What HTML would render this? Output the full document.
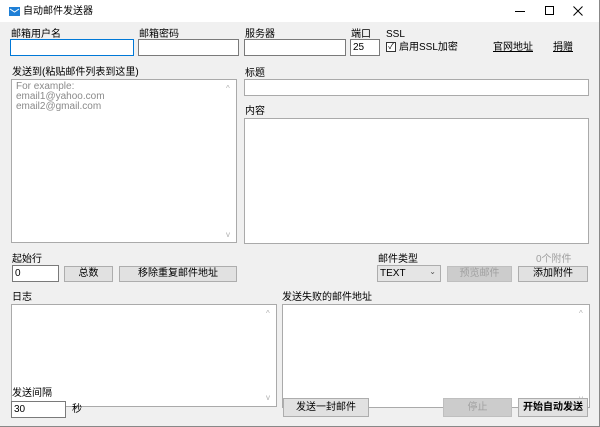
<!DOCTYPE html>
<html><head><meta charset="utf-8"><style>
*{box-sizing:border-box;margin:0;padding:0}
body{width:600px;height:427px;overflow:hidden;background:#f0f0f0;font-family:"Liberation Sans","Noto Sans CJK SC",sans-serif;font-size:10px;color:#000;position:relative}
.a{position:absolute;white-space:nowrap;line-height:12px}
.tb{position:absolute;left:0;top:0;width:600px;height:22px;background:#fff}
.in{position:absolute;background:#fff;border:1px solid #7a7a7a;font-size:10px;line-height:12px}
.btn{position:absolute;background:#e1e1e1;border:1px solid #adadad;text-align:center;font-size:10px}
.dis{color:#a0a0a0;background:#cccccc;border-color:#bfbfbf}
.sb{position:absolute;color:#b0b0b0;font-size:8px}
</style></head><body>
<div class="tb"></div>
<svg class="a" style="left:9px;top:7px" width="11" height="9"><rect x="0" y="0" width="11" height="9" fill="#1e7fd6"/><path d="M1 2 L5.5 5 L10 2" stroke="#fff" fill="none" stroke-width="1"/></svg>
<div class="a" style="left:23px;top:6px">自动邮件发送器</div>
<div class="a" style="left:515px;top:11px;width:10px;height:1px;background:#000"></div>
<div class="a" style="left:545px;top:6px;width:9px;height:9px;border:1px solid #000"></div>
<svg class="a" style="left:573px;top:6px" width="10" height="10"><path d="M0.5 0.5 L9.5 9.5 M9.5 0.5 L0.5 9.5" stroke="#000" stroke-width="1"/></svg>

<div class="a" style="left:11px;top:29px">邮箱用户名</div>
<div class="a" style="left:139px;top:29px">邮箱密码</div>
<div class="a" style="left:245px;top:29px">服务器</div>
<div class="a" style="left:351px;top:29px">端口</div>
<div class="a" style="left:386px;top:29px">SSL</div>
<div class="in" style="left:10px;top:39px;width:124px;height:17px;border-color:#0078d7"></div>
<div class="in" style="left:138px;top:39px;width:101px;height:17px"></div>
<div class="in" style="left:244px;top:39px;width:102px;height:17px"></div>
<div class="in" style="left:350px;top:39px;width:30px;height:17px;padding:2px 2px">25</div>
<div class="a" style="left:386px;top:42px;width:10px;height:10px;border:1px solid #333;background:#fff;font-size:8px;line-height:8px;text-align:center">✓</div>
<div class="a" style="left:399px;top:42px">启用SSL加密</div>
<div class="a" style="left:493px;top:42px;text-decoration:underline">官网地址</div>
<div class="a" style="left:553px;top:42px;text-decoration:underline">捐赠</div>

<div class="a" style="left:12px;top:67px">发送到(粘贴邮件列表到这里)</div>
<div class="in" style="left:11px;top:79px;width:226px;height:164px;border-color:#aaa;padding:2px 4px;color:#8a8a8a;line-height:10px;font-size:10px">For example:<br>email1@yahoo.com<br>email2@gmail.com</div>
<div class="sb" style="left:226px;top:84px">^</div><div class="sb" style="left:226px;top:230px">v</div>
<div class="a" style="left:245px;top:68px">标题</div>
<div class="in" style="left:244px;top:79px;width:345px;height:17px;border-color:#aaa"></div>
<div class="a" style="left:245px;top:106px">内容</div>
<div class="in" style="left:244px;top:118px;width:345px;height:126px;border-color:#aaa"></div>

<div class="a" style="left:12px;top:254px">起始行</div>
<div class="in" style="left:12px;top:265px;width:47px;height:17px;padding:2px 2px">0</div>
<div class="btn" style="left:64px;top:266px;width:49px;height:16px;line-height:14px">总数</div>
<div class="btn" style="left:119px;top:266px;width:118px;height:16px;line-height:14px">移除重复邮件地址</div>
<div class="a" style="left:378px;top:254px">邮件类型</div>
<div class="in" style="left:377px;top:265px;width:64px;height:17px;background:#e5e5e5;border-color:#adadad;padding:2px 2px">TEXT<span style="position:absolute;right:4px;top:0px;color:#555;font-size:8px">⌄</span></div>
<div class="btn dis" style="left:447px;top:266px;width:65px;height:16px;line-height:14px">预览邮件</div>
<div class="btn" style="left:518px;top:266px;width:70px;height:16px;line-height:14px">添加附件</div>
<div class="a" style="left:536px;top:254px;color:#a0a0a0">0个附件</div>

<div class="a" style="left:12px;top:292px">日志</div>
<div class="in" style="left:11px;top:304px;width:266px;height:103px;border-color:#aaa"></div>
<div class="sb" style="left:266px;top:309px">^</div><div class="sb" style="left:266px;top:393px">v</div>
<div class="a" style="left:282px;top:292px">发送失败的邮件地址</div>
<div class="in" style="left:282px;top:304px;width:308px;height:104px;border-color:#aaa"></div>
<div class="sb" style="left:579px;top:309px">^</div><div class="sb" style="left:579px;top:394px">v</div>

<div class="a" style="left:12px;top:388px">发送间隔</div>
<div class="in" style="left:11px;top:401px;width:55px;height:17px;padding:2px 2px">30</div>
<div class="a" style="left:72px;top:404px">秒</div>
<div class="btn" style="left:283px;top:398px;width:86px;height:19px;line-height:17px">发送一封邮件</div>
<div class="btn dis" style="left:443px;top:398px;width:69px;height:19px;line-height:17px">停止</div>
<div class="btn" style="left:518px;top:398px;width:70px;height:19px;line-height:17px;font-weight:bold">开始自动发送</div>
<div class="a" style="left:599px;top:0;width:1px;height:427px;background:#888"></div>
<div class="a" style="left:0;top:426px;width:600px;height:1px;background:#888"></div>
</body></html>
